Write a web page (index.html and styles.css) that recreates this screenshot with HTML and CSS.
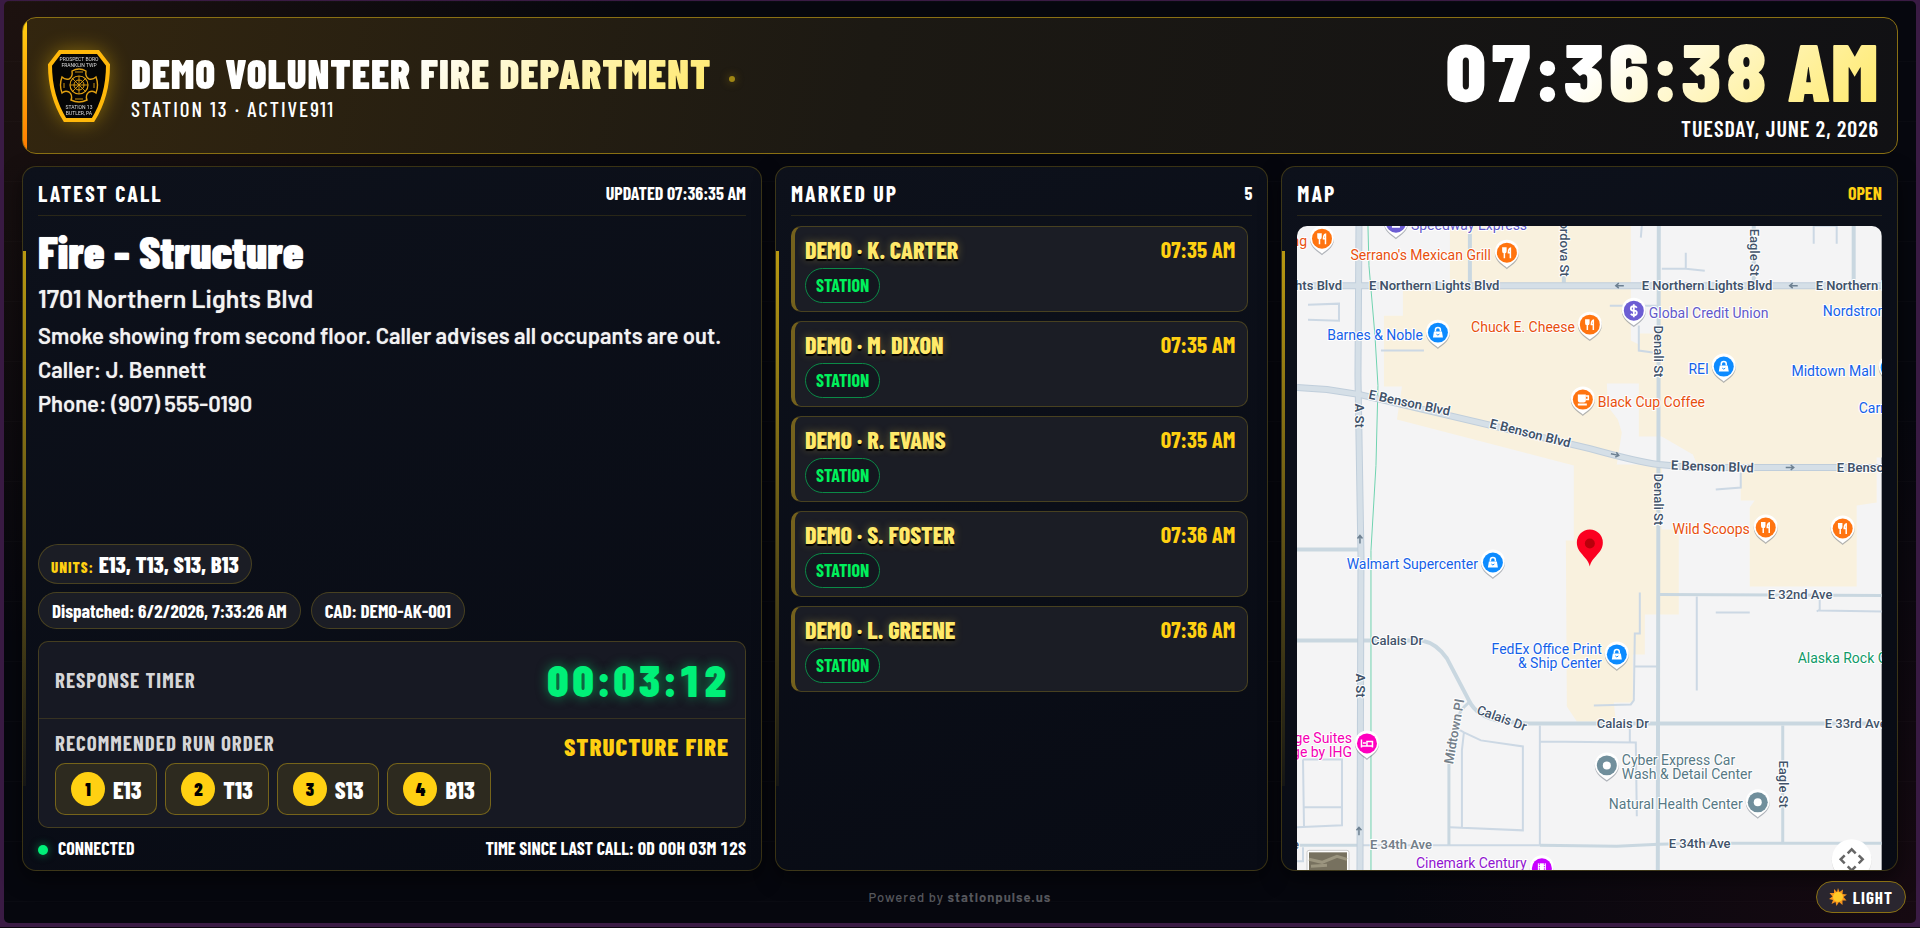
FILE: index.html
```html
<!DOCTYPE html>
<html lang="en">
<head>
  <meta charset="UTF-8" />
  <meta name="viewport" content="width=device-width, initial-scale=1.0" />
  <title>StationPulse</title>
  <link rel="stylesheet" href="styles.css">
</head>
<body>
  <div class="app">
    <header class="topbar">
      <svg class="badge" viewBox="0 0 64 72" aria-hidden="true">
        <path d="M13 2H51L61 15Q61 46 46 70H18Q3 46 3 15Z" fill="#050505" stroke="#ffb80a" stroke-width="4"/>
        <g class="badge-text">
          <text x="32" y="11">PROSPECT BORO</text>
          <text x="32" y="17">FRANKLIN TWP</text>
          <text x="32" y="59">STATION 13</text>
          <text x="32" y="65">BUTLER, PA</text>
        </g>
        <g fill="none" stroke="#e0a012">
          <path d="M25 21Q32 17 39 21Q38 27 42 29Q46 30 49 27Q52 35 49 43Q46 40 42 42Q38 45 40 50Q32 54 24 50Q26 45 22 42Q18 40 15 43Q12 35 15 27Q18 30 22 29Q26 27 25 21Z" stroke-width="1.4"/>
          <circle cx="32" cy="35" r="9" stroke-width="1.2"/>
          <circle cx="32" cy="35" r="5" stroke-width="1"/>
          <path d="M25 28L39 42M39 28L25 42M32 26V44M23 35H41M28 22H36M28 49H36M17 33V38M47 33V38" stroke-width=".9"/>
        </g>
      </svg>
      <div class="brand">
        <h1>DEMO VOLUNTEER FIRE DEPARTMENT</h1>
        <p>STATION 13 · ACTIVE911</p>
      </div>
      <span class="live-dot"></span>
      <div class="clock">
        <div class="clock-time">07:36:38 AM</div>
        <div class="clock-date">TUESDAY, JUNE 2, 2026</div>
      </div>
    </header>

    <main class="board">
      <section class="panel">
        <div class="panel-head">
          <h2>LATEST CALL</h2>
          <span class="panel-note">UPDATED 07:36:35 AM</span>
        </div>
        <div class="call">
          <h3>Fire - Structure</h3>
          <p class="address">1701 Northern Lights Blvd</p>
          <p>Smoke showing from second floor. Caller advises all occupants are out.</p>
          <p>Caller: J. Bennett</p>
          <p>Phone: (907) 555-0190</p>
        </div>
        <div class="pills">
          <span class="pill units"><small>UNITS:</small> E13, T13, S13, B13</span>
        </div>
        <div class="pills">
          <span class="pill">Dispatched: 6/2/2026, 7:33:26 AM</span>
          <span class="pill">CAD: DEMO-AK-001</span>
        </div>
        <div class="timer-card">
          <div class="timer-row">
            <span class="label">RESPONSE TIMER</span>
            <span class="timer">00:03:12</span>
          </div>
          <div class="run-row">
            <div>
              <div class="label">RECOMMENDED RUN ORDER</div>
              <ol class="run-order">
                <li><b>1</b>E13</li>
                <li><b>2</b>T13</li>
                <li><b>3</b>S13</li>
                <li><b>4</b>B13</li>
              </ol>
            </div>
            <span class="run-type">STRUCTURE FIRE</span>
          </div>
        </div>
        <div class="status">
          <span class="connected">CONNECTED</span>
          <span>TIME SINCE LAST CALL: 0D 00H 03M 12S</span>
        </div>
      </section>

      <section class="panel">
        <div class="panel-head">
          <h2>MARKED UP</h2>
          <span class="panel-note">5</span>
        </div>
        <ul class="members">
          <li><div><strong>DEMO · K. CARTER</strong><span class="tag">STATION</span></div><time>07:35 AM</time></li>
          <li><div><strong>DEMO · M. DIXON</strong><span class="tag">STATION</span></div><time>07:35 AM</time></li>
          <li><div><strong>DEMO · R. EVANS</strong><span class="tag">STATION</span></div><time>07:35 AM</time></li>
          <li><div><strong>DEMO · S. FOSTER</strong><span class="tag">STATION</span></div><time>07:36 AM</time></li>
          <li><div><strong>DEMO · L. GREENE</strong><span class="tag">STATION</span></div><time>07:36 AM</time></li>
        </ul>
      </section>

      <section class="panel map-panel">
        <div class="panel-head">
          <h2>MAP</h2>
          <a class="panel-note open" href="#">OPEN</a>
        </div>
        <svg class="map" viewBox="0 0 585 645" preserveAspectRatio="xMidYMid slice">
          <defs>
            <g id="pin">
              <path d="M0 15C-3 12-12 8-12-1A12 12 0 0 1 12-1C12 8 3 12 0 15Z" fill="#6b7480" opacity=".5" transform="translate(0 1.5)"/>
              <path d="M0 15C-3 12-12 8-12-1A12 12 0 0 1 12-1C12 8 3 12 0 15Z" fill="#fff"/>
              <circle r="10"/>
            </g>
            <g id="food">
              <use href="#pin" fill="#ff7410"/>
              <path d="M-4-5.500V-1.500Q-4 0-2.500 0Q-1 0-1-1.500V-5.500M-2.500-5.500V5.500M3.500 5.500V-4.500Q1.500-4 1.500 0H3.500" fill="none" stroke="#fff" stroke-width="1.500"/>
            </g>
            <g id="shop">
              <use href="#pin" fill="#0d8bff"/>
              <path d="M-4-1H4L5 5H-5Z" fill="#fff"/>
              <path d="M-2.500-1V-2.500A2.500 2.500 0 0 1 2.500-2.500V-1" fill="none" stroke="#fff" stroke-width="1.500"/>
              <path d="M-1.500 1.500Q0 3.500 1.500 1.500" fill="none" stroke="#0d8bff"/>
            </g>
            <g id="place">
              <use href="#pin" fill="#718f9c"/>
              <circle r="4" fill="#fff"/>
            </g>
            <path id="way" d="M-4 0H4M1-2.500L4 0L1 2.500" fill="none" stroke="#6d8091" stroke-width="1.500"/>
          </defs>

          <rect width="585" height="645" fill="#f4f4f5"/>
          <!-- commercial areas -->
          <g fill="#f9f1de">
            <path d="M153 0H334V115L342 119V108H362V240H365V304H382V389H348V429H336V477H317L319 496H280L270 481L269 315H277V240L100 194L105 161H87V90H106V62H153Z"/>
            <path d="M360 62H585V232H580V239H400L396 229L370 221L360 211Z"/>
            <path d="M444 245H580V277L560 280V361H453V282L458 275H444Z"/>
          </g>
          <path d="M310 158H342V211H365L396 229L400 239H320L322 226L325 207L321 194L311 181Z" fill="#f4f4f5"/>

          <!-- small streets -->
          <g fill="none" stroke="#ccd8e4" stroke-width="2">
            <path d="M345 0L344 12M365 43H389L408 45M389 27V43M517 18V0H540V18M313 80H360M342 100V125L356 127M444 247V262L419 264"/>
            <path d="M11 79L42 78V95L11 94M84 125H127M523 372V385L585 386M523 384L520 386M400 371V465M419 387L453 387"/>
            <path d="M343 367V408H338L337 475L334 479L297 480M338 441H360M153 602L226 605V521L184 515L167 507L160 503M167 507L165 525V603"/>
            <path d="M243 500V620M243 516L339 517L340 591M333 500V517M6 534H45V600L0 602M6 534L7 601M7 582H45M6 622V636H0M66 620H243"/>
          </g>
          <g fill="none" stroke="#c9d7e0" stroke-width="4">
            <path d="M173 8V57M267 50V57M557 0V57M457 0V57M362 0L361 645M0 324H61M0 415H125Q140 418 150 433L172 475Q180 492 205 496L231 498H585"/>
            <path d="M0 620H61M243 620L320 621L362 619L400 618H585M363 369L585 370M486 500V617M172 477Q153 492 152 540V620" stroke-width="3"/>
          </g>
          <path d="M71 0L72 40L78 110L81 160L79 240L74 325V645" fill="none" stroke="#6fd3b0"/>
          <!-- main roads -->
          <g fill="none" stroke="#c0cedb" stroke-width="7">
            <path d="M0 60H585"/>
            <path d="M62 0L61 150L64 330L63 645"/>
            <path d="M0 162L30 164L63 169L293 223Q340 236 362 239L395 242H585"/>
          </g>
          <g fill="none" stroke="#d5dfe7" stroke-width="5">
            <path d="M0 60H585"/>
            <path d="M62 0L61 150L64 330L63 645"/>
            <path d="M0 162L30 164L63 169L293 223Q340 236 362 239L395 242H585"/>
          </g>
          <use href="#way" transform="translate(323 60) rotate(180)"/>
          <use href="#way" transform="translate(497 60) rotate(180)"/>
          <use href="#way" transform="translate(318 229) rotate(12)"/>
          <use href="#way" transform="translate(493 242)"/>
          <use href="#way" transform="translate(63 314) rotate(-90)"/>
          <use href="#way" transform="translate(62 606) rotate(-90)"/>

          <g class="road-name">
            <text x="45" y="64" text-anchor="end">E Northern Lights Blvd</text>
            <text x="72" y="64">E Northern Lights Blvd</text>
            <text x="345" y="64">E Northern Lights Blvd</text>
            <text x="519" y="64">E Northern Lights Blvd</text>
            <text transform="translate(71 173) rotate(12)">E Benson Blvd</text>
            <text transform="translate(192 202) rotate(14)">E Benson Blvd</text>
            <text transform="translate(374 244) rotate(2)">E Benson Blvd</text>
            <text x="540" y="246">E Benson Blvd</text>
            <text transform="translate(58 178) rotate(90)">A St</text>
            <text transform="translate(59 448) rotate(90)">A St</text>
          </g>
          <g class="road-name minor">
            <text transform="translate(263 51) rotate(90)" text-anchor="end">Cordova St</text>
            <text transform="translate(453 3) rotate(90)">Eagle St</text>
            <text transform="translate(357 100) rotate(90)">Denali St</text>
            <text transform="translate(357 248) rotate(90)">Denali St</text>
            <text transform="translate(482 535) rotate(90)">Eagle St</text>
            <text x="74" y="420">Calais Dr</text>
            <text transform="translate(179 488) rotate(20)">Calais Dr</text>
            <text x="300" y="503">Calais Dr</text>
            <text x="471" y="374">E 32nd Ave</text>
            <text x="528" y="503">E 33rd Ave</text>
            <text x="372" y="623">E 34th Ave</text>
            <text x="2" y="624" text-anchor="end">Ave</text>
          </g>
          <g class="road-name faint">
            <text x="73" y="624">E 34th Ave</text>
            <text transform="translate(156 539) rotate(-80)">Midtown Pl</text>
          </g>

          <g class="poi">
            <g fill="#e8500e">
              <text x="10" y="20" text-anchor="end">Grilling</text>
              <text x="194" y="34" text-anchor="end">Serrano's Mexican Grill</text>
              <text x="278" y="106" text-anchor="end">Chuck E. Cheese</text>
              <text x="301" y="181">Black Cup Coffee</text>
              <text x="453" y="309" text-anchor="end">Wild Scoops</text>
            </g>
            <g fill="#1561e8">
              <text x="126" y="114" text-anchor="end">Barnes &amp; Noble</text>
              <text x="412" y="148" text-anchor="end">REI</text>
              <text x="526" y="90">Nordstrom</text>
              <text x="579" y="150" text-anchor="end">Midtown Mall</text>
              <text x="562" y="187">Carrs</text>
              <text x="181" y="344" text-anchor="end">Walmart Supercenter</text>
              <text x="305" y="429" text-anchor="end">FedEx Office Print</text>
              <text x="305" y="443" text-anchor="end">&amp; Ship Center</text>
            </g>
            <g fill="#6259c9">
              <text x="114" y="4">Speedway Express</text>
              <text x="352" y="92">Global Credit Union</text>
            </g>
            <g fill="#f400b4">
              <text x="55" y="518" text-anchor="end">StayBridge Suites</text>
              <text x="55" y="532" text-anchor="end">Anchorage by IHG</text>
            </g>
            <g fill="#577985">
              <text x="325" y="540">Cyber Express Car</text>
              <text x="325" y="554">Wash &amp; Detail Center</text>
              <text x="446" y="584" text-anchor="end">Natural Health Center</text>
            </g>
            <text x="119" y="643" fill="#9115d0">Cinemark Century</text>
            <text x="501" y="438" fill="#109a68">Alaska Rock Gym</text>
          </g>

          <use href="#food" x="25" y="13"/>
          <use href="#food" x="210" y="27"/>
          <use href="#food" x="293" y="99"/>
          <use href="#food" x="469" y="302"/>
          <use href="#food" x="546" y="303"/>
          <use href="#shop" x="141" y="107"/>
          <use href="#shop" x="427" y="141"/>
          <use href="#shop" x="594" y="142"/>
          <use href="#shop" x="196" y="337"/>
          <use href="#shop" x="320" y="429"/>
          <use href="#place" x="310" y="540"/>
          <use href="#place" x="461" y="577"/>
          <use href="#pin" x="99" y="-3" fill="#6c5dd3"/>
          <path d="M95 2H103V-4H95Z" fill="#fff"/>
          <g transform="translate(286 174)">
            <use href="#pin" fill="#ff7410"/>
            <path d="M-5-5H3V1Q3 3 1 3H-3Q-5 3-5 1ZM-5 4H4V6H-5Z" fill="#fff"/>
            <path d="M3-3.500H5.500V0H3" fill="none" stroke="#fff" stroke-width="1.500"/>
          </g>
          <g transform="translate(337 85)">
            <use href="#pin" fill="#6c5dd3"/>
            <path d="M3-3Q2-4.500 0-4.500Q-3-4.500-3-2Q-3 0 0 0Q3 0 3 2Q3 4.500 0 4.500Q-2 4.500-3 3M0-6.500V6.500" fill="none" stroke="#fff" stroke-width="1.800"/>
          </g>
          <g transform="translate(70 518)">
            <use href="#pin" fill="#ff00bf"/>
            <path d="M-5.500-4V4M-5.500 2.500H5.500M5.500 4V-2H0V2M-4-.5H-1" fill="none" stroke="#fff" stroke-width="1.500"/>
          </g>
          <g transform="translate(245 643)">
            <use href="#pin" fill="#c800ff"/>
            <path d="M-4-5H4V5H-4Z" fill="#fff"/>
            <path d="M-2.500-5V5M2.500-5V5" fill="none" stroke="#c800ff" stroke-dasharray="1.500 1"/>
          </g>
          <path d="M293 341C291 331 280 328 280 317A13 13 0 0 1 306 317C306 328 295 331 293 341Z" fill="#fb0020"/>
          <circle cx="293" cy="318" r="5" fill="#b8000b"/>
          <!-- satellite thumbnail and camera control -->
          <rect x="10" y="625" width="42" height="24" rx="2" fill="#fff" stroke="#c9c9c9"/>
          <rect x="12" y="627" width="38" height="20" fill="#77715f"/>
          <path d="M12 634L25 637L40 631L50 634M14 641L30 640" stroke="#9b957f" stroke-width="3" fill="none"/>
          <circle cx="555" cy="635" r="20" fill="#d5d5d5"/>
          <circle cx="555" cy="634" r="20" fill="#fff"/>
          <path d="M551 628L555 624L559 628M548 630L544 634L548 638M562 630L566 634L562 638M551 641L555 645L559 641" fill="none" stroke="#666" stroke-width="2.500"/>
        </svg>
      </section>
    </main>

    <footer class="footer">
      <p>Powered by <b>stationpulse.us</b></p>
      <button class="theme-btn" type="button">
        <svg viewBox="0 0 18 18" aria-hidden="true">
          <path d="M9 0L10.500 4L14 1.500L13.500 6L18 6.500L14.500 9L17.500 12.500L13.500 12.500L13.500 17L10 14L7.500 18L6.500 14L2.500 16L4 12L0 11L3.500 8.500L.5 5L5 5L5 1L8 4Z" fill="#f7941d"/>
          <circle cx="9" cy="9" r="5" fill="#ffc928"/>
        </svg>
        LIGHT
      </button>
    </footer>
  </div>
</body>
</html>
```
FILE: styles.css
```css
:root {
  --gold: #ffd012;
  --gold-soft: #ffe96a;
  --line: rgba(255, 208, 18, 0.2);
  --green: #00f078;
  --card: #1b1d25;
  --condensed: "Barlow Condensed", "Liberation Sans Narrow", "Roboto Condensed", sans-serif;
  --body: "Barlow", "Roboto", sans-serif;
}

* {
  box-sizing: border-box;
}

h1, h2, h3, p, ul, ol {
  margin: 0;
  padding: 0;
}

ul, ol {
  list-style: none;
}

body {
  margin: 0;
  height: 100vh;
  padding: 1px 4px 5px;
  background: #3a1b44;
  box-shadow: inset 0 -1px #0c0710;
  color: #fff;
  font-family: var(--condensed);
  font-weight: 700;
}

.app {
  display: flex;
  flex-direction: column;
  height: 100%;
  padding: 16px 18px 0;
  border-radius: 5px;
  background:
    repeating-linear-gradient(rgba(255, 255, 255, 0.015) 0 1px, transparent 1px 60px),
    radial-gradient(circle at 0 0, rgba(120, 60, 20, 0.2), transparent 30%),
    radial-gradient(circle at 100% 100%, rgba(140, 30, 40, 0.12), transparent 25%),
    #06070e;
}

.topbar {
  display: flex;
  align-items: center;
  padding: 12px 18px 11px 24px;
  position: relative;
  overflow: hidden;
  border: 1px solid #8a7013;
  border-radius: 14px;
  background: linear-gradient(100deg, #33260f, #1c1913 45%, #111114);
}

.topbar::before {
  content: "";
  position: absolute;
  left: 0;
  top: 0;
  bottom: 0;
  width: 4px;
  background: linear-gradient(#ffd012, #ff7a00);
}

.badge {
  width: 64px;
  height: 72px;
  filter: drop-shadow(0 0 10px rgba(255, 200, 0, 0.4));
}

.badge-text {
  fill: #ddd;
  font: 5px "Roboto", sans-serif;
  text-anchor: middle;
}

.brand {
  margin-left: 20px;
  padding-top: 2px;
}

.brand h1 {
  font-size: 41px;
  line-height: 44px;
  font-weight: 900;
  letter-spacing: 1px;
  background: linear-gradient(135deg, #fff 45%, var(--gold-soft));
  background-clip: text;
  -webkit-background-clip: text;
  color: transparent;
}

.brand p {
  font-size: 21px;
  line-height: 28px;
  font-weight: 500;
  letter-spacing: 2px;
}

.live-dot {
  width: 6px;
  height: 6px;
  margin: 0 0 14px 18px;
  border-radius: 50%;
  background: #a08714;
  box-shadow: 0 0 8px #7a6510;
}

.clock {
  margin-left: auto;
  text-align: right;
}

.clock-time {
  font-size: 82px;
  line-height: 78px;
  font-weight: 900;
  font-variant-numeric: tabular-nums;
  letter-spacing: 1px;
  background: linear-gradient(135deg, #fff 35%, var(--gold-soft));
  background-clip: text;
  -webkit-background-clip: text;
  color: transparent;
}

.clock-date {
  margin-top: 6px;
  font-size: 22px;
  line-height: 28px;
  font-weight: 600;
  letter-spacing: 1px;
}

.board {
  flex: 1;
  min-height: 0;
  display: grid;
  grid-template-columns: 1.5fr 1fr 1.25fr;
  gap: 13px;
  margin-top: 12px;
}

.panel {
  display: flex;
  flex-direction: column;
  min-width: 0;
  padding: 0 15px;
  position: relative;
  overflow: hidden;
  border: 1px solid var(--line);
  border-radius: 14px;
  background: linear-gradient(160deg, #0d111b, #080b14);
  box-shadow: 0 8px 20px rgba(0, 0, 0, 0.5);
}

.panel::before {
  content: "";
  position: absolute;
  left: 0;
  top: 12%;
  bottom: 12%;
  width: 3px;
  background: linear-gradient(#b89811, #b8981110);
}

.panel-head {
  display: flex;
  justify-content: space-between;
  align-items: center;
  height: 49px;
  padding-top: 4px;
  border-bottom: 1px solid rgba(255, 208, 18, 0.12);
}

.panel-head h2 {
  font-size: 22px;
  letter-spacing: 2px;
}

.panel-note {
  font-size: 18px;
}

.open {
  color: var(--gold);
  text-decoration: none;
}

.call {
  flex: 1;
  padding-top: 8px;
  font-family: var(--body);
  font-weight: 600;
  color: #f2f2f2;
  text-shadow: 0 0 1px rgba(255, 255, 255, 0.5);
}

.call h3 {
  font: 900 46px/54px var(--condensed);
  color: #fff;
}

.call p {
  font-size: 22px;
  line-height: 34px;
}

.call .address {
  font-size: 25px;
  line-height: 40px;
}

.pills {
  display: flex;
  gap: 10px;
  margin-bottom: 8px;
}

.pill {
  padding: 0 13px;
  border: 1px solid var(--line);
  border-radius: 20px;
  background: var(--card);
  font-size: 19px;
  line-height: 35px;
}

.units {
  padding: 0 12px;
  font-size: 23px;
  line-height: 38px;
  font-weight: 800;
}

.units small {
  font-size: 15px;
  line-height: 1;
  letter-spacing: 1px;
  color: var(--gold);
}

.timer-card {
  margin-top: 4px;
  border: 1px solid rgba(255, 208, 18, 0.2);
  border-radius: 10px;
  background: #171923;
}

.timer-row,
.run-row {
  display: flex;
  justify-content: space-between;
  padding: 0 16px;
}

.timer-row {
  align-items: center;
  height: 77px;
  border-bottom: 1px solid rgba(255, 208, 18, 0.14);
}

.run-row {
  padding-top: 11px;
  padding-bottom: 12px;
}

.label {
  font-size: 21px;
  line-height: 26px;
  letter-spacing: 1px;
  color: #d6d6d8;
}

.timer {
  font-size: 43px;
  font-weight: 900;
  font-variant-numeric: tabular-nums;
  letter-spacing: 2px;
  color: var(--green);
  text-shadow: 0 0 12px rgba(0, 240, 120, 0.5);
}

.run-order {
  display: flex;
  gap: 8px;
  margin-top: 7px;
}

.run-order li {
  display: flex;
  align-items: center;
  gap: 8px;
  padding: 8px 15px;
  border: 1px solid rgba(255, 208, 18, 0.35);
  border-radius: 10px;
  background: #2d2a1f;
  font-size: 24px;
  font-weight: 800;
}

.run-order b {
  width: 34px;
  border-radius: 50%;
  background: var(--gold);
  color: #000;
  font-size: 18px;
  line-height: 34px;
  text-align: center;
}

.run-type {
  font-size: 25px;
  line-height: 32px;
  font-weight: 800;
  letter-spacing: 1px;
  color: var(--gold);
}

.status {
  display: flex;
  justify-content: space-between;
  padding: 8px 0 10px;
  font-size: 18px;
  line-height: 24px;
  font-variant-numeric: tabular-nums;
}

.connected::before {
  content: "";
  display: inline-block;
  width: 10px;
  height: 10px;
  margin-right: 10px;
  border-radius: 50%;
  background: var(--green);
  box-shadow: 0 0 8px rgba(0, 240, 120, 0.5);
}

.members {
  display: flex;
  flex-direction: column;
  gap: 9px;
  padding: 10px 4px 0 0;
}

.members li {
  display: flex;
  justify-content: space-between;
  padding: 7px 12px 8px 10px;
  border: 1px solid var(--line);
  border-left: 4px solid #74611d;
  border-radius: 10px;
  background: var(--card);
}

.members strong {
  display: block;
  margin-bottom: 2px;
  font-size: 24px;
  line-height: 32px;
  font-weight: 800;
  color: var(--gold-soft);
  text-shadow: 0 2px 1px #000, 0 0 8px rgba(255, 220, 80, 0.35);
}

.members time {
  font-size: 23px;
  line-height: 30px;
  color: var(--gold);
}

.tag {
  display: inline-block;
  padding: 0 10px;
  border: 1px solid #0b8a47;
  border-radius: 18px;
  background: #14161f;
  color: #00f05c;
  font-size: 18px;
  line-height: 33px;
}

.map {
  flex: 1;
  min-height: 0;
  width: 100%;
  margin-top: 10px;
  border-radius: 10px 10px 0 0;
}

.map text {
  font-family: "Roboto", sans-serif;
  stroke: #fff;
  stroke-width: 2px;
  stroke-linejoin: round;
  paint-order: stroke;
}

.road-name {
  fill: #42536a;
  font-size: 13px;
  font-weight: 600;
}

.minor {
  font-weight: 500;
}

.faint {
  fill: #75808a;
}

.poi {
  font-size: 14px;
  font-weight: 400;
}

.footer {
  display: flex;
  align-items: center;
  justify-content: center;
  height: 52px;
  position: relative;
  color: #55565c;
  font: 500 13px var(--body);
  letter-spacing: 1px;
}

.theme-btn {
  display: flex;
  align-items: center;
  gap: 6px;
  position: absolute;
  right: -8px;
  top: 10px;
  height: 32px;
  padding: 0 12px;
  border: 1px solid #8a7013;
  border-radius: 16px;
  background: #2a262f;
  color: #fff;
  font: 700 17px var(--condensed);
  letter-spacing: 1px;
}

.theme-btn svg {
  width: 18px;
  height: 18px;
}
```
